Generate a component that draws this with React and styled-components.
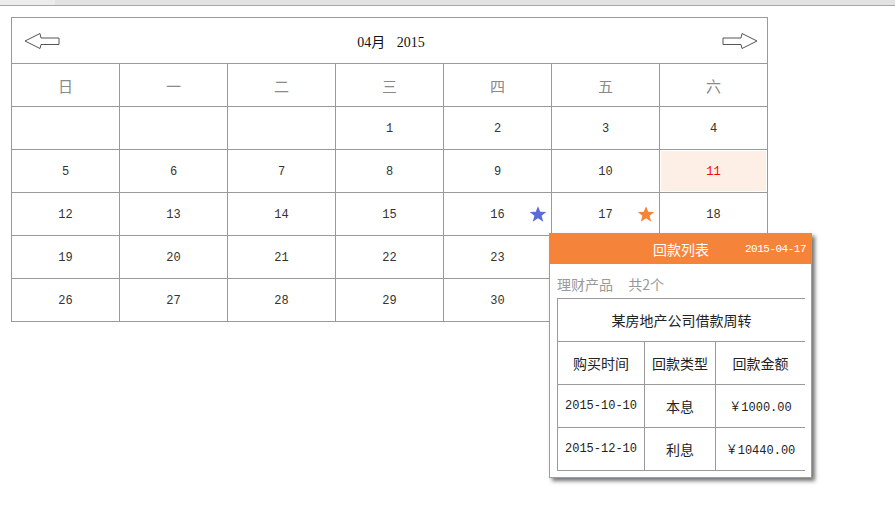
import React from "react";
import styled, { createGlobalStyle } from "styled-components";

const GlobalStyle = createGlobalStyle`
  html, body {
    margin: 0;
    padding: 0;
    background: #fff;
    font-family: "Liberation Mono", "Noto Sans CJK SC", monospace;
  }
`;

const TopStrip = styled.div`
  height: 5px;
  background: linear-gradient(to right, #ececec 55px, #e2e2e2 55px);
  border-bottom: 1px solid #a8a8a8;
`;

const Page = styled.div`
  position: relative;
  padding: 11px 0 0 11px;
  min-height: 510px;
  box-sizing: border-box;
`;

const Calendar = styled.div`
  display: grid;
  grid-template-columns: repeat(7, 107px);
  grid-template-rows: 45px;
  grid-auto-rows: 42px;
  gap: 1px;
  padding: 1px;
  width: max-content;
  background: #9a9a9a;
`;

const Header = styled.div`
  grid-column: 1 / -1;
  background: #fff;
  display: flex;
  align-items: center;
  justify-content: space-between;
  padding: 0 9px 0 12px;
`;

const MonthLabel = styled.span`
  font-family: "Liberation Serif", "Noto Sans CJK SC", serif;
  font-size: 14px;
  color: #111;
  word-spacing: 8px;
`;

const ArrowButton = styled.span`
  display: flex;
  width: 37px;
  height: 18px;
`;

const WeekDay = styled.div`
  background: #fff;
  display: flex;
  align-items: center;
  justify-content: center;
  font-family: "Noto Sans CJK SC", sans-serif;
  font-size: 15px;
  color: #8a8a8a;
`;

const Day = styled.div`
  position: relative;
  background: #fff;
  display: flex;
  align-items: center;
  justify-content: center;
  font-size: 12px;
  color: #333;
  padding-top: 1px;
  box-sizing: border-box;
  ${(p) =>
    p.$today &&
    `
    color: #f00;
    box-shadow: inset 0 0 0 1px #fff;
    background: #fdefe6;
  `}
`;

const Star = styled.svg`
  position: absolute;
  right: 4px;
  top: 12px;
  width: 18px;
  height: 18px;
`;

const Popup = styled.div`
  position: absolute;
  left: 549px;
  top: 227px;
  width: 263px;
  background: #fff;
  border: 1px solid #f5843a;
  border-top: none;
  box-shadow: 3px 3px 4px rgba(0, 0, 0, 0.55);
  box-sizing: border-box;
  padding-bottom: 6px;
`;

const PopupHead = styled.div`
  height: 31px;
  background: #f5843a;
  display: flex;
  align-items: center;
  justify-content: flex-end;
  padding-right: 5px;
  color: #fff;
`;

const PopupTitle = styled.span`
  font-family: "Noto Sans CJK SC", sans-serif;
  font-size: 14px;
  line-height: 18px;
  margin-right: 36px;
`;

const PopupDate = styled.span`
  font-size: 11px;
  line-height: 14px;
  letter-spacing: -0.5px;
`;

const Summary = styled.div`
  padding: 10px 7px 4px;
  font-family: "Noto Sans CJK SC", sans-serif;
  font-size: 14px;
  color: #999;
  word-spacing: 12px;
`;

const Table = styled.div`
  margin: 0 6px 0 7px;
  display: grid;
  grid-template-columns: 86px 70px 89px;
  grid-auto-rows: 42px;
  gap: 1px;
  padding: 1px;
  background: #9a9a9a;
`;

const Cell = styled.div`
  grid-column: ${(p) => (p.$full ? "1 / -1" : "auto")};
  background: #fff;
  display: flex;
  align-items: center;
  justify-content: center;
  font-family: ${(p) =>
    p.$num ? `"Liberation Mono", "Noto Sans CJK SC", monospace` : `"Noto Sans CJK SC", sans-serif`};
  font-size: ${(p) => (p.$num ? "12px" : "14px")};
  color: #222;
`;

const LeftArrow = () => (
  <svg width="37" height="18" viewBox="0 0 37 18">
    <path
      d="M1 9 L16 1.5 L17 6 L35 6 L35 12.5 L17 12.5 L16 16.5 Z"
      fill="#fff"
      stroke="#555"
      strokeWidth="1"
    />
  </svg>
);

const RightArrow = () => (
  <svg width="37" height="18" viewBox="0 0 37 18">
    <path
      d="M36 9 L21 1.5 L20 6 L2 6 L2 12.5 L20 12.5 L21 16.5 Z"
      fill="#fff"
      stroke="#555"
      strokeWidth="1"
    />
  </svg>
);

const StarIcon = ({ color }) => (
  <Star viewBox="0 0 24 24">
    <path
      d="M12 1.5 L15 9 L23 9.3 L16.8 14.3 L19 22.3 L12 17.8 L5 22.3 L7.2 14.3 L1 9.3 L9 9 Z"
      fill={color}
    />
  </Star>
);

const weekDays = ["日", "一", "二", "三", "四", "五", "六"];

const days = [
  "", "", "", 1, 2, 3, 4,
  5, 6, 7, 8, 9, 10, 11,
  12, 13, 14, 15, 16, 17, 18,
  19, 20, 21, 22, 23, 24, 25,
  26, 27, 28, 29, 30, "", "",
];

const stars = { 16: "#5b6cd8", 17: "#f5843a" };

const rows = [
  ["2015-10-10", "本息", "￥1000.00"],
  ["2015-12-10", "利息", "￥10440.00"],
];

export default function App() {
  return (
    <>
      <GlobalStyle />
      <TopStrip />
      <Page>
        <Calendar>
          <Header>
            <ArrowButton>
              <LeftArrow />
            </ArrowButton>
            <MonthLabel>04月 2015</MonthLabel>
            <ArrowButton>
              <RightArrow />
            </ArrowButton>
          </Header>
          {weekDays.map((w) => (
            <WeekDay key={w}>{w}</WeekDay>
          ))}
          {days.map((d, i) => (
            <Day key={i} $today={d === 11}>
              {d}
              {stars[d] && <StarIcon color={stars[d]} />}
            </Day>
          ))}
        </Calendar>

        <Popup>
          <PopupHead>
            <PopupTitle>回款列表</PopupTitle>
            <PopupDate>2015-04-17</PopupDate>
          </PopupHead>
          <Summary>理财产品 共2个</Summary>
          <Table>
            <Cell $full>某房地产公司借款周转</Cell>
            <Cell>购买时间</Cell>
            <Cell>回款类型</Cell>
            <Cell>回款金额</Cell>
            {rows.map((r) =>
              r.map((c, i) => (
                <Cell key={r[0] + i} $num={i !== 1}>
                  {c}
                </Cell>
              ))
            )}
          </Table>
        </Popup>
      </Page>
    </>
  );
}
